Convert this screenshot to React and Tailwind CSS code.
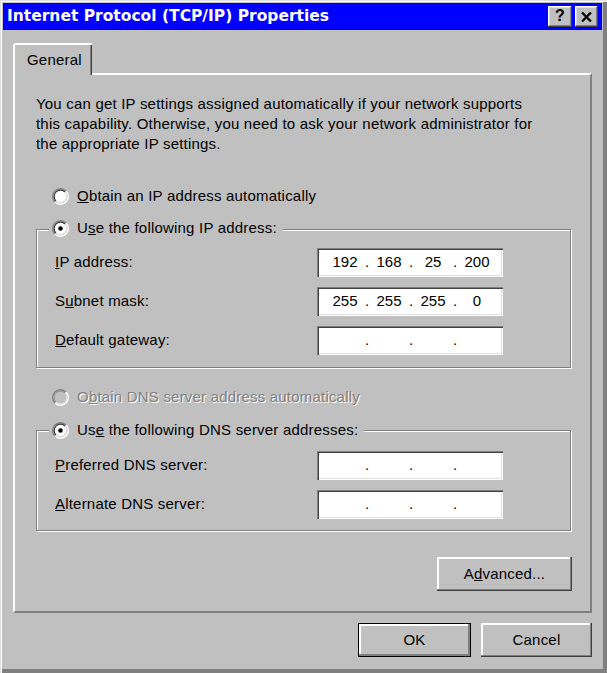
import React from "react";

function Radio({ checked, disabled }) {
  return (
    <svg width="17" height="17" viewBox="0 0 12 12" className="shrink-0">
      <path d="M2.11 9.89A5.5 5.5 0 0 1 9.89 2.11" fill="none" stroke="#808080" strokeWidth="1" />
      <path d="M9.89 2.11A5.5 5.5 0 0 1 2.11 9.89" fill="none" stroke="#ffffff" strokeWidth="1" />
      <path d="M2.82 9.18A4.5 4.5 0 0 1 9.18 2.82" fill="none" stroke={disabled ? "#9a9a9a" : "#404040"} strokeWidth="1" />
      <path d="M9.18 2.82A4.5 4.5 0 0 1 2.82 9.18" fill="none" stroke="#dfdfdf" strokeWidth="1" />
      <circle cx="6" cy="6" r="4" fill={disabled ? "#c0c0c0" : "#ffffff"} />
      {checked && <circle cx="6" cy="6" r="1.6" fill="#000000" />}
    </svg>
  );
}

function IPBox({ v = ["", "", "", ""] }) {
  return (
    <div className="w-[186px] h-[29px] bg-white shadow-[inset_1px_1px_#808080,inset_2px_2px_#404040,inset_-1px_-1px_#ffffff,inset_-2px_-2px_#dfdfdf] flex items-center pl-[10px] text-[15px] tracking-normal text-black shrink-0">
      {v.map((x, i) => (
        <React.Fragment key={i}>
          <span className="w-[36px] text-center">{x}</span>
          {i < 3 && <span className="w-[8px] text-center">.</span>}
        </React.Fragment>
      ))}
    </div>
  );
}

function Row({ label, v }) {
  return (
    <div className="flex items-center h-[29px]">
      <div className="w-[262px] text-[15px]">{label}</div>
      <IPBox v={v} />
    </div>
  );
}

export default function App() {
  return (
    <div className="w-[607px] h-[673px] bg-[#c0c0c0] shadow-[inset_1px_1px_#dfdfdf,inset_2px_2px_#ffffff,inset_-4px_-4px_#808080] pt-[3px] pl-[3px] pr-[5px] flex flex-col font-['Liberation_Sans',Arial,sans-serif] tracking-[0.2px] text-black select-none">
      {/* Title bar */}
      <div className="h-[27px] bg-[#0000ff] flex items-center justify-between pl-[4px] pr-[4px]">
        <span className="text-white font-bold text-[15.5px] tracking-normal font-['DejaVu_Sans',sans-serif] leading-none whitespace-nowrap">
          Internet Protocol (TCP/IP) Properties
        </span>
        <div className="flex items-center gap-[3px]">
          <div className="w-[24px] h-[21px] bg-[#c0c0c0] shadow-[inset_-1px_-1px_#404040,inset_1px_1px_#ffffff,inset_-2px_-2px_#808080,inset_2px_2px_#dfdfdf] flex items-center justify-center text-[16px] font-bold leading-none pb-[1px]">
            ?
          </div>
          <div className="w-[23px] h-[21px] bg-[#c0c0c0] shadow-[inset_-1px_-1px_#404040,inset_1px_1px_#ffffff,inset_-2px_-2px_#808080,inset_2px_2px_#dfdfdf] flex items-center justify-center">
            <svg width="11" height="10" viewBox="0 0 11 10">
              <path d="M1 0.5L10 9.5M10 0.5L1 9.5" stroke="#000" strokeWidth="2.3" />
            </svg>
          </div>
        </div>
      </div>

      <div className="pl-[10px] pt-[13px] flex flex-col">
        {/* Tab */}
        <div className="relative z-10 w-[79px] h-[32px] -mb-[2px] bg-[#c0c0c0] border-l-2 border-t-2 border-white rounded-tl-[3px] shadow-[inset_-1px_0_#404040,inset_-2px_0_#808080] pl-[12px] pt-[6px] text-[15px] leading-[17px]">
          General
        </div>

        {/* Panel */}
        <div className="w-[579px] h-[540px] border-2 border-t-white border-l-white border-r-[#808080] border-b-[#808080] pl-[21px] flex flex-col text-[15px]">
          <div className="mt-[19px] leading-[20px] whitespace-nowrap">
            You can get IP settings assigned automatically if your network supports
            <br />
            this capability. Otherwise, you need to ask your network administrator for
            <br />
            the appropriate IP settings.
          </div>

          <div className="mt-[32px] h-[20px] flex items-center pl-[16px] gap-[8px]">
            <Radio />
            <span>
              <u>O</u>btain an IP address automatically
            </span>
          </div>

          <div className="mt-[23px] w-[535px] relative border border-[#808080] shadow-[inset_1px_1px_#ffffff,1px_1px_#ffffff] pt-[18px] pb-[12px] pl-[18px] flex flex-col gap-[10px]">
            <div className="absolute left-[12px] -top-[12px] h-[20px] bg-[#c0c0c0] pl-[3px] pr-[6px] flex items-center gap-[8px]">
              <Radio checked />
              <span>
                U<u>s</u>e the following IP address:
              </span>
            </div>
            <Row label={<><u>I</u>P address:</>} v={["192", "168", "25", "200"]} />
            <Row label={<>S<u>u</u>bnet mask:</>} v={["255", "255", "255", "0"]} />
            <Row label={<><u>D</u>efault gateway:</>} />
          </div>

          <div className="mt-[19px] h-[20px] flex items-center pl-[16px] gap-[8px]">
            <Radio disabled />
            <span className="text-[#808080] [text-shadow:1px_1px_0_#ffffff]">
              O<u>b</u>tain DNS server address automatically
            </span>
          </div>

          <div className="mt-[23px] w-[535px] relative border border-[#808080] shadow-[inset_1px_1px_#ffffff,1px_1px_#ffffff] pt-[20px] pb-[11px] pl-[18px] flex flex-col gap-[10px]">
            <div className="absolute left-[12px] -top-[11px] h-[20px] bg-[#c0c0c0] pl-[3px] pr-[6px] flex items-center gap-[8px]">
              <Radio checked />
              <span>
                Us<u>e</u> the following DNS server addresses:
              </span>
            </div>
            <Row label={<><u>P</u>referred DNS server:</>} />
            <Row label={<><u>A</u>lternate DNS server:</>} />
          </div>

          <div className="mt-[26px] w-[536px] flex justify-end">
            <div className="w-[135px] h-[34px] bg-[#c0c0c0] shadow-[inset_-1px_-1px_#404040,inset_-2px_-2px_#808080,inset_2px_2px_#ffffff] flex items-center justify-center">
              A<u>d</u>vanced...
            </div>
          </div>
        </div>

        {/* Bottom buttons */}
        <div className="mt-[10px] w-[579px] flex justify-end gap-[10px] text-[15px]">
          <div className="w-[113px] h-[34px] border border-black shadow-[inset_-2px_-2px_#808080,inset_2px_2px_#ffffff] flex items-center justify-center">
            OK
          </div>
          <div className="w-[111px] h-[34px] shadow-[inset_-1px_-1px_#404040,inset_-2px_-2px_#808080,inset_2px_2px_#ffffff] flex items-center justify-center">
            Cancel
          </div>
        </div>
      </div>
    </div>
  );
}
